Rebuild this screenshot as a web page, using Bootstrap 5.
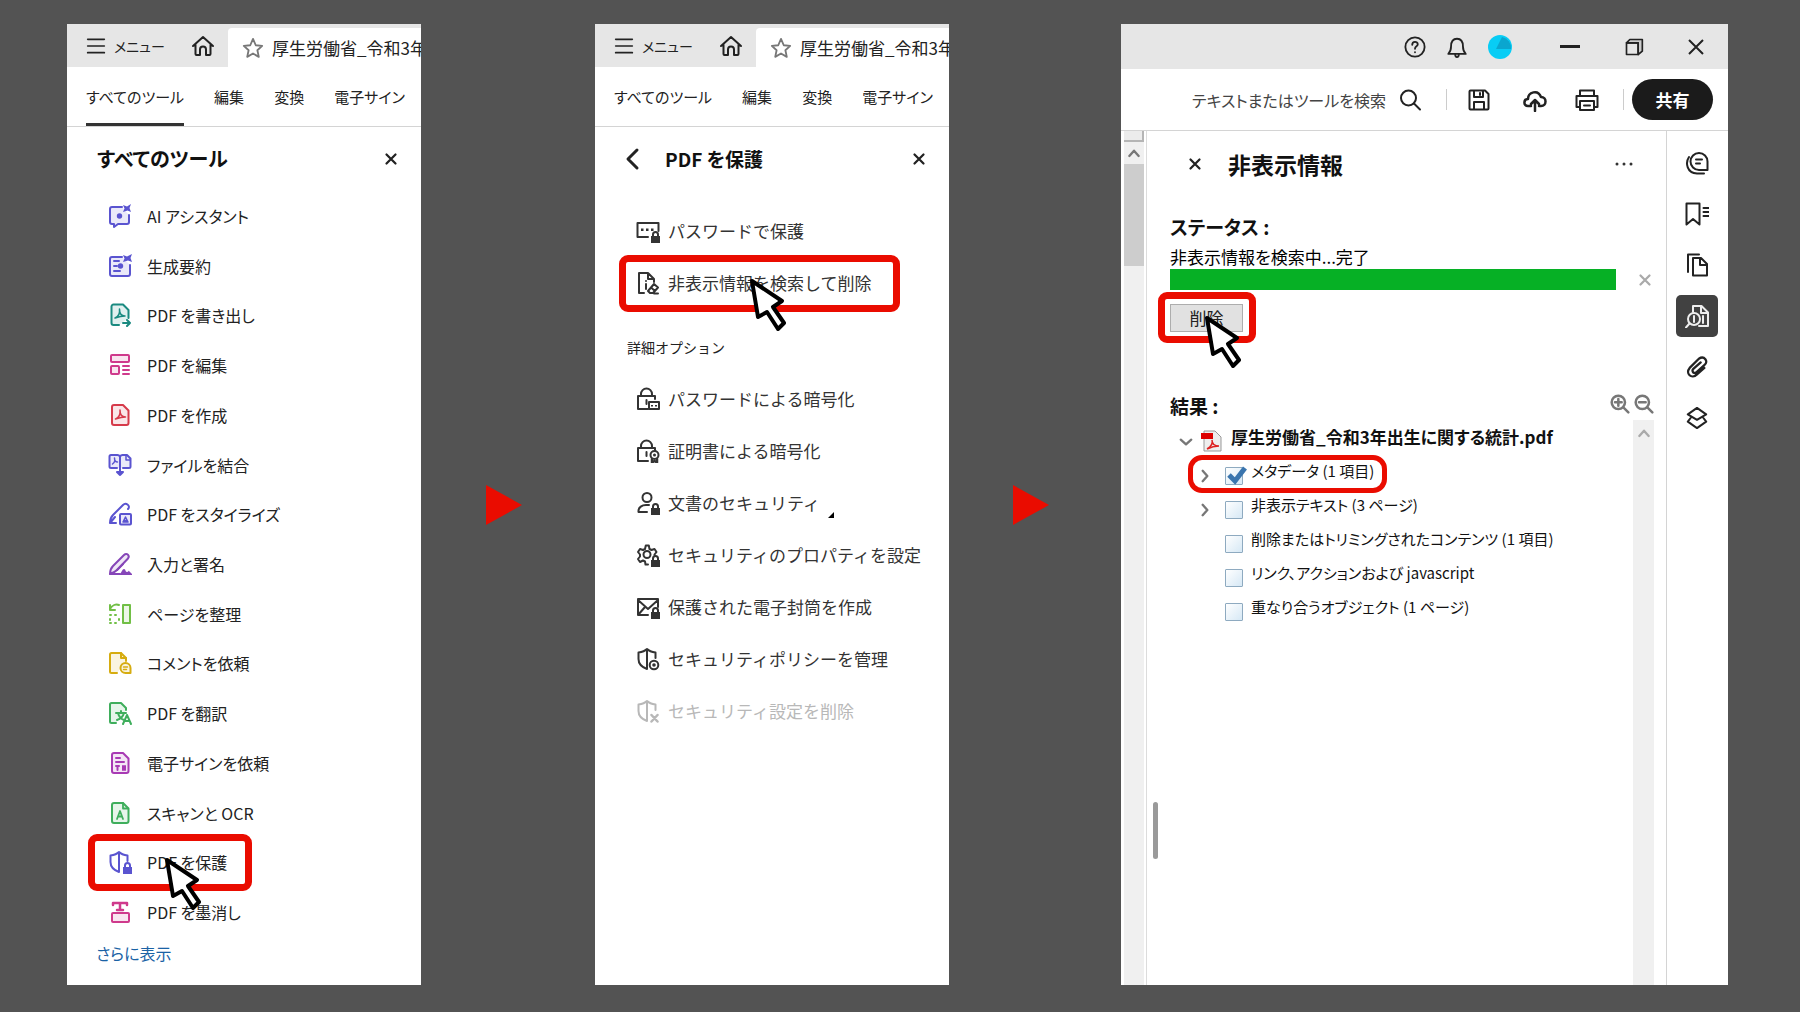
<!DOCTYPE html>
<html lang="ja">
<head>
<meta charset="utf-8">
<meta name="viewport" content="width=device-width, initial-scale=1">
<title>PDF の非表示情報を削除する手順</title>
<link href="https://cdn.jsdelivr.net/npm/bootstrap@5.3.0/dist/css/bootstrap.min.css" rel="stylesheet">
<style>
:root { --ink: #222; --line: #d4d4d4; --bar: #e6e6e6; --hit: #ea0c00; }
body { background: #535353; color: var(--ink); font-family: "Noto Sans CJK JP", sans-serif; font-size: 17px; line-height: 24px; font-feature-settings: "palt"; }
.steps { display: grid; grid-template-columns: 354fr 174fr 354fr 172fr 607fr; min-height: 100vh; padding: 24px 4% 27px 67px; }
button { font: inherit; font-feature-settings: inherit; color: inherit; background: none; border: 0; padding: 0; white-space: nowrap; }
svg { display: block; flex: none; overflow: visible; }
.ic { width: 24px; height: 24px; fill: none; stroke: currentColor; stroke-width: 2; stroke-linejoin: round; stroke-linecap: round; }
.ic-22 { width: 22px; height: 22px; }
.ic-20 { width: 20px; height: 20px; }
.ic-14 { width: 14px; height: 14px; stroke-width: 4; }
.bold-line { stroke-width: 3; }
.solid { fill: currentColor; stroke: none; }
.tint { fill: currentColor; fill-opacity: .13; }
.c-indigo { color: #5a54d0; } .c-teal { color: #1a8a80; } .c-pink { color: #cf3a8c; } .c-red { color: #d63a4a; }
.c-purple { color: #8646b8; } .c-lime { color: #71bf46; } .c-gold { color: #d6ac10; } .c-green { color: #3fae5c; }
.c-violet { color: #a83ab4; } .c-grey { color: #777; } .c-pale { color: #aaa; }
.shot { background: #fff; min-width: 0; }
.arrow svg { width: 36px; height: 40px; fill: var(--hit); }
.topbar { background: var(--bar); height: 43px; padding-left: 19px; }
.menu-label { font-size: 14px; }
.home-btn { margin: 0 13px 0 auto; }
.filetab { background: #fff; width: 193px; height: 39px; padding-left: 14px; border-top-left-radius: 4px; }
.tabs-row { height: 60px; padding-left: 19px; gap: 30px; border-bottom: 1px solid var(--line); font-size: 15px; }
.tabs-row button.on { box-shadow: inset 0 -3px #333; }
.head { height: 64px; padding: 0 21px 0 26px; }
.head h2, .pane h2, .pane h3 { font-size: 20px; line-height: 28px; font-weight: 700; margin: 0; color: #111; }
.head .sub-title { font-size: 19px; }
.pane h2 { font-size: 23px; }
.pane h3 { font-size: 19px; }
.x-btn .ic { width: 18px; height: 18px; }
.toolset { padding-left: 41px; font-size: 16px; }
.toolset > li { flex: 1 1 0; min-height: 32px; }
.toolset button { gap: 15px; }
.more { height: 48px; padding-left: 29px; }
.more a { color: #1a62a5; text-decoration: none; font-size: 16px; }
.guard { padding-left: 41px; font-feature-settings: normal; }
.guard-main { padding-top: 14px; }
.guard > li { height: 52px; }
.guard button { gap: 8px; color: #333; }
.guard .dim { color: #b8b8b8; }
.guard-title { font-size: 14px; padding: 12px 0 0 32px; height: 64px; font-feature-settings: normal; }
.mark-box { position: absolute; border: 7px solid var(--hit); border-radius: 9px; pointer-events: none; }
.pointer { position: absolute; width: 36px; height: 52px; fill: #fff; stroke: #000; stroke-width: 4; stroke-linejoin: round; pointer-events: none; z-index: 3; }
.hit-a { left: -20px; width: 164px; top: -4px; bottom: -4px; }
.ptr-a { left: 57px; top: 20px; }
.hit-b { left: -17px; width: 281px; top: -2px; bottom: -3px; }
.ptr-b { left: 114px; top: 22px; }
.hit-c { left: -12px; right: -13px; top: -12px; bottom: -11px; }
.ptr-c { left: 35px; top: 12px; }
.hit-d { left: 18px; width: 199px; top: 1px; bottom: -5px; border-width: 5px; border-radius: 14px; }
.winbar { background: var(--bar); height: 45px; padding-right: 24px; }
.win-gap { margin-left: 44px; }
.toolbar { height: 62px; border-bottom: 1px solid var(--line); padding-right: 15px; }
.find-box { border: 0; outline: 0; text-align: right; width: 220px; padding: 0; color: #444; font: inherit; font-size: 16px; background: none; }
.find-box::placeholder { color: #444; opacity: 1; }
.split { width: 1px; height: 21px; background: #ccc; }
.share { background: #1b1b1b; color: #fff; border-radius: 21px; height: 41px; width: 81px; font-weight: 700; }
.outer-scroll { width: 26px; border-right: 1px solid #dcdcdc; padding: 0 2px 0 3px; }
.outer-scroll .stub { height: 11px; background: #ececec; border: solid #b5b5b5; border-width: 0 2px 2px 0; }
.track { background: #f0f0f0; color: #777; }
.outer-scroll .thumb { height: 102px; background: #cdcdcd; }
.grip { width: 5px; height: 57px; border-radius: 3px; background: #9a9a9a; position: absolute; left: 6px; top: 70%; margin-top: 73px; }
.rail { width: 62px; border-left: 1px solid var(--line); padding: 11px 2px 0 0; gap: 9px; }
.rail button { width: 42px; height: 42px; border-radius: 5px; display: flex; align-items: center; justify-content: center; }
.rail .on { background: #414141; color: #eee; }
.pane { padding: 0 12px 0 23px; min-width: 0; }
.pane-head { height: 66px; }
.progress { height: 21px; border-radius: 0; background: #eee; }
.progress-bar { background: #06b025; }
.del-row { padding-top: 14px; }
.del-btn { width: 73px; height: 28px; background: #e1e1e1; border: 1px solid #adadad; }
.tree { font-size: 15px; color: #111; }
.tree li { height: 34px; position: relative; padding-left: 28px; }
.tree li.root { padding-left: 9px; font-size: 17px; font-weight: 700; }
.tree .twist { width: 18px; padding-top: 10px; color: #777; }
.tree input { appearance: none; width: 18px; height: 18px; margin: 10px 8px 0 9px; border: 1px solid #8eaac0; border-radius: 1px; background: linear-gradient(135deg, #fff, #d6e8f5); flex: none; }
.tick { position: absolute; left: 57px; top: 12px; width: 20px; height: 18px; fill: none; stroke: #3a75ae; stroke-width: 5; pointer-events: none; }
.inner-scroll { width: 21px; padding-top: 6px; }
</style>
</head>
<body>
<svg width="0" height="0" class="position-absolute" aria-hidden="true">
<defs>
<symbol id="menu" viewBox="0 0 24 24"><path d="M2 4h20M2 12h20M2 20h20"/></symbol>
<symbol id="home" viewBox="0 0 24 24"><path d="M2 12 12 3l10 9M4.500 10.500V20a1 1 0 0 0 1 1H9v-5.500a3 3 0 0 1 6 0V21h3.500a1 1 0 0 0 1-1v-9.500"/></symbol>
<symbol id="star" viewBox="0 0 24 24"><path d="m12 2 3 7 7 .7-5.200 4.800 1.500 7.200-6.300-3.700-6.300 3.700 1.500-7.200L2 9.700 9 9z"/></symbol>
<symbol id="close" viewBox="0 0 24 24"><path d="m6 6 12 12M18 6 6 18"/></symbol>
<symbol id="up" viewBox="0 0 24 24"><path d="m4 17 8-9 8 9"/></symbol>
<symbol id="right" viewBox="0 0 24 24"><path d="m8 3 8 9-8 9"/></symbol>
<symbol id="down" viewBox="0 0 24 24"><path d="m3 8 9 8 9-8"/></symbol>
<symbol id="back" viewBox="0 0 24 24"><path d="m16 3-9 9 9 9"/></symbol>
<symbol id="ai" viewBox="0 0 24 24"><path class="tint" d="M14 3H4a2 2 0 0 0-2 2v13a2 2 0 0 0 2 2h2v3l4-3h9a2 2 0 0 0 2-2v-7"/><path class="solid" d="m15 1 4 1.500L23 0l-1.500 4L23 8l-3.500-1.500L15 8l1.500-3.500z"/><circle class="solid" cx="11.500" cy="12" r="2.700"/></symbol>
<symbol id="gen" viewBox="0 0 24 24"><path class="tint" d="M14 3H4a2 2 0 0 0-2 2v15a2 2 0 0 0 2 2h16a2 2 0 0 0 2-2v-9"/><path d="M6 7h5M6 12h3M6 17h6"/><path class="solid" d="m15 1 4 1.500L24 0l-1.500 4L24 8l-4-1.500L15 8l1.500-3.500z"/><circle class="solid" cx="12.500" cy="12" r="2.700"/></symbol>
<symbol id="export" viewBox="0 0 24 24"><path class="tint" d="M11 22H5.500a2 2 0 0 1-2-2V3.500a2 2 0 0 1 2-2H15l5.500 5.500v8"/><path d="M15 20h7m-3-3 3 3-3 3"/><path stroke-width="1.500" d="M7 15c3-1 5-4 4.500-9 0 5 2 7 5.500 7-4 0-7 1-10 2"/></symbol>
<symbol id="edit" viewBox="0 0 24 24"><rect class="tint" x="3" y="2" width="18" height="7" rx="1"/><rect class="tint" x="3" y="13" width="8" height="8" rx="1"/><path d="M15 13h6M15 17h6M15 21h6"/></symbol>
<symbol id="create" viewBox="0 0 24 24"><path class="tint" d="M15 2H6a2 2 0 0 0-2 2v16a2 2 0 0 0 2 2h12.500a2 2 0 0 0 2-2V7.500z"/><path stroke-width="1.500" d="M7.500 16c3-1 5-4 4.500-9 0 5 2 7 5.500 7-4 0-7 1-10 2"/></symbol>
<symbol id="merge" viewBox="0 0 24 24"><path class="tint" d="M9 15H3a1.500 1.500 0 0 1-1.500-1.500v-10A1.500 1.500 0 0 1 3 2h6.500c2 0 2 1 2.500 2 .5-1 .5-2 2.500-2H19l3.500 3.500v8A1.500 1.500 0 0 1 21 15h-6"/><path d="M12 4v18m-3-3 3 3 3-3z"/><path stroke-width="1.500" d="M4.500 11C7 9 7 8 6.500 5c0 3 1 4 3 4M18 2.500V7h4"/></symbol>
<symbol id="stylize" viewBox="0 0 24 24"><path d="M8 21H2c0-4 1-6 3-8L15 3c3-3 8 1 5 4M2 21l5-6"/><rect class="tint" x="12" y="12" width="11" height="10.500" rx="1"/><path stroke-width="1.500" d="m15 20 2.500-5 2.500 5zm1-1.500h3"/></symbol>
<symbol id="sign" viewBox="0 0 24 24"><path class="tint" d="M2 22c0-3 1-6 3-8L16 3c3-3 6 1 4 3.500L9 18c-2 2-4 3-7 4z"/><path d="M2 22h10M9 18l6-6"/><path class="solid" d="M11 23c2-1 3-6 5-6s1 3 3 3 1-2 2-1l3 3v1z"/></symbol>
<symbol id="organize" viewBox="0 0 24 24"><rect class="tint" x="15" y="3" width="7" height="18"/><path d="M2 8V3m0 5h5M2 7c2-4 6-5 9-4"/><path stroke-dasharray="1 4" d="M2 13h9M2 21h9M2 17v1M11 17v1"/></symbol>
<symbol id="comment" viewBox="0 0 24 24"><path class="tint" d="M9 22H3.500A1.500 1.500 0 0 1 2 20.500v-17A1.500 1.500 0 0 1 3.500 2H13l5 5v3"/><path d="M13 2v5h5"/><path class="tint" d="M17.500 12a5 5 0 0 1 5 5v5h-5a5 5 0 0 1 0-10z"/><path stroke-width="1.500" d="M15.500 16h4M15.500 18.500h3"/></symbol>
<symbol id="translate" viewBox="0 0 24 24"><path class="tint" d="M8 22H3.500A1.500 1.500 0 0 1 2 20.500v-17A1.500 1.500 0 0 1 3.500 2H13l5 5v2"/><path d="M8 12h10M13 10v2M16 12c-1 4-4 6-7 7M10 12c1 4 3 6 6 7M15 23l4-9 4 9m-6.500-3h5"/></symbol>
<symbol id="esign" viewBox="0 0 24 24"><path class="tint" d="M15 2H6a2 2 0 0 0-2 2v16a2 2 0 0 0 2 2h12.500a2 2 0 0 0 2-2V7.500z"/><path d="M8 7h4M8 11h8M8 15h3M9.500 15v4M15 15v4M17 15v4"/></symbol>
<symbol id="ocr" viewBox="0 0 24 24"><path class="tint" d="M15 2H6a2 2 0 0 0-2 2v16a2 2 0 0 0 2 2h12.500a2 2 0 0 0 2-2V7.500z"/><path stroke-width="1.800" d="M15 2v5.500h5M9 18l3-8 3 8m-5-2.500h4"/></symbol>
<symbol id="lock" viewBox="0 0 24 24"><path class="solid" d="M15 17h1v-1.500a3.500 3.500 0 0 1 7 0V17h1v7h-9zm3 0h3v-1.500a1.500 1.500 0 0 0-3 0z"/></symbol>
<symbol id="shield" viewBox="0 0 24 24"><path d="M19.500 11V5.500C16 5 13 4 11 2 9 4 6 5 2.500 5.500V12c0 5 3 8 8.500 10V2"/></symbol>
<symbol id="redact" viewBox="0 0 24 24"><path stroke-width="2.500" d="M5 5V3h14v2M12 3v7M9 10h6"/><rect class="tint" x="4" y="13" width="17" height="9" rx="1"/></symbol>
<symbol id="pwd" viewBox="0 0 24 24"><path d="M12 18H1.500V4h21v8"/><path class="solid" d="M5 9.500h2.500V12H5zm5 0h2.500V12H10zm5 0h2.500V12H15z"/></symbol>
<symbol id="hidden" viewBox="0 0 24 24"><path d="M8 22H3V2h9l6 6v3M12 2v6h6M10 13v5M10 10v.1"/><path d="m12 20 6-7 4 3.500-5 5.500h-3zm3-3.500 4 3.500M18 22.500h4"/></symbol>
<symbol id="bodylock" viewBox="0 0 24 24"><path d="M12 22H2V9h17v3M5 9V7a5.500 5.500 0 0 1 11 0v2M10.500 13v4"/></symbol>
<symbol id="card-b" viewBox="0 0 24 24"><path d="M13 15h10v7H13z"/><path class="solid" d="M15 18h2v1.500h-2zm4 0h2v1.500h-2z"/></symbol>
<symbol id="ribbon" viewBox="0 0 24 24"><circle cx="18.500" cy="16" r="4"/><path d="M16 20v3.500l2.500-1.500 2.500 1.500V20" stroke-width="2.500"/><circle class="solid" cx="18.500" cy="16" r="1.500"/></symbol>
<symbol id="person" viewBox="0 0 24 24"><circle cx="11" cy="6.500" r="4.500"/><path d="M11 21H2.500c-.5-5 4-7 7.500-7h3"/></symbol>
<symbol id="gear" viewBox="0 0 24 24"><path d="M12 21.500h-2.500L9 18.500l-2-1-3 1.500-2-3 2-2.500v-2L2 9l2-3 3 1 2-1 .8-3.500h3l.7 3.500 2 1 3-1 2 3-2 2.500v.5"/><circle cx="11" cy="11.500" r="3.500"/></symbol>
<symbol id="mail" viewBox="0 0 24 24"><path d="M12 20H2V4h20v8M2 5l10 9L22 5M2 20l7-8"/></symbol>
<symbol id="cog-b" viewBox="0 0 24 24"><circle cx="18" cy="18" r="4.300"/><circle class="solid" cx="18" cy="18" r="1.800"/></symbol>
<symbol id="x-b" viewBox="0 0 24 24"><path stroke-width="2.500" d="m15.500 16 6 6.500m0-6.500-6 6.500"/></symbol>
<symbol id="help" viewBox="0 0 24 24"><circle cx="12" cy="12" r="10.500"/><path d="M9 9.500c0-4 6-4 6-.5 0 2.500-3 2-3 5M12 17.500v.2"/></symbol>
<symbol id="bell" viewBox="0 0 24 24"><path d="M2.500 19.500h19c-2-2-3-3.500-3-8 0-5-2-8.500-6.500-8.500s-6.500 3.500-6.500 8.500c0 4.500-1 6-3 8zM10 20c0 4 4 4 4 0"/></symbol>
<symbol id="restore" viewBox="0 0 24 24"><path d="M3 7h14v14H3z"/><path class="tint" d="m3 7 4-4h15v14l-5 4V7z"/></symbol>
<symbol id="find" viewBox="0 0 24 24"><circle cx="10.500" cy="10" r="7.500"/><path d="m16 15.500 6 6"/></symbol>
<symbol id="save" viewBox="0 0 24 24"><path d="M2.500 3.500a1 1 0 0 1 1-1H18l3.500 3.500v14.500a1 1 0 0 1-1 1h-17a1 1 0 0 1-1-1zM7 3v6h9V3M7 21v-7h10v7M13 5v2"/></symbol>
<symbol id="cloud" viewBox="0 0 24 24"><path stroke-width="2.500" d="M8 18H5c-5 0-4.500-7 0-7 0-7 10-10 13-2 6 0 6 9 0 9h-2M12 23V12m-4 4 4-4 4 4"/></symbol>
<symbol id="print" viewBox="0 0 24 24"><path d="M5 19H1.500V8h21v11H19M5 8V2.500h14V8M5 13h14v9H5zM9 17.500h6"/></symbol>
<symbol id="chat" viewBox="0 0 24 24"><path d="M14 2a8.500 8.500 0 0 1 8.500 8.500V19H14a8.500 8.500 0 0 1 0-17zM11 8.500h6M11 12.500h4M4 6c-4 6-2 16 8 16.500h7"/></symbol>
<symbol id="bookmark" viewBox="0 0 24 24"><path d="M1.500 1.500h13v21L8 17l-6.500 5.500zM18.500 6H24M18.500 10H24M18.500 14H24"/></symbol>
<symbol id="pages" viewBox="0 0 24 24"><path d="M8 5h8l6 6v11.500H8zM15 5v7h7M3 19V1.500h11"/></symbol>
<symbol id="inspect" viewBox="0 0 24 24"><path d="M8 8V2h8.500L23 8.500V22h-9M16 2v7h6"/><circle cx="9" cy="15" r="6"/><path d="m4.500 19.500-3.500 4M9 12v6M18 12v7"/></symbol>
<symbol id="clip" viewBox="0 0 24 24"><path stroke-width="2.500" d="m20 13-8 7c-6 6-13-1-8-7L14 3c6-4 11 3 6 7l-9 8c-3 2-5-2-3-4l8-7"/></symbol>
<symbol id="layers" viewBox="0 0 24 24"><path stroke-width="2.200" d="m12 1 10 7-10 6L2 8zM5 12l-3 4 10 7 10-7-3-4"/></symbol>
<symbol id="zin" viewBox="0 0 24 24"><circle cx="10" cy="10" r="8"/><path d="m16 16 6 6M6 10h8M10 6v8"/></symbol>
<symbol id="zout" viewBox="0 0 24 24"><circle cx="10" cy="10" r="8"/><path d="m16 16 6 6M6 10h8"/></symbol>
<symbol id="cursor" viewBox="0 0 36 52"><path d="M2 2 32 22 23 28 34 44 28 50 17 33 8 38z"/></symbol>
</defs>
</svg>

<main class="steps">
  <!-- Step 1: all tools -->
  <section class="shot d-flex flex-column overflow-hidden">
    <div class="topbar d-flex align-items-center">
      <button class="d-flex align-items-center gap-2" type="button"><svg class="ic ic-20"><use href="#menu"/></svg><span class="menu-label">メニュー</span></button>
      <button class="home-btn" type="button" aria-label="ホーム"><svg class="ic"><use href="#home"/></svg></button>
      <div class="filetab d-flex align-items-center align-self-end text-nowrap"><svg class="ic ic-22 c-grey me-2"><use href="#star"/></svg>厚生労働省_令和3年</div>
    </div>
    <nav class="tabs-row d-flex text-nowrap"><button class="on" type="button">すべてのツール</button><button type="button">編集</button><button type="button">変換</button><button type="button">電子サイン</button></nav>
    <div class="head d-flex align-items-center justify-content-between"><h2 class="ps-1">すべてのツール</h2><button class="x-btn" type="button" aria-label="閉じる"><svg class="ic bold-line"><use href="#close"/></svg></button></div>
    <ul class="toolset list-unstyled d-flex flex-column flex-grow-1 mb-0">
      <li class="d-flex"><button class="d-flex align-items-center" type="button"><svg class="ic c-indigo"><use href="#ai"/></svg>AI アシスタント</button></li>
      <li class="d-flex"><button class="d-flex align-items-center" type="button"><svg class="ic c-indigo"><use href="#gen"/></svg>生成要約</button></li>
      <li class="d-flex"><button class="d-flex align-items-center" type="button"><svg class="ic c-teal"><use href="#export"/></svg>PDF を書き出し</button></li>
      <li class="d-flex"><button class="d-flex align-items-center" type="button"><svg class="ic c-pink"><use href="#edit"/></svg>PDF を編集</button></li>
      <li class="d-flex"><button class="d-flex align-items-center" type="button"><svg class="ic c-red"><use href="#create"/></svg>PDF を作成</button></li>
      <li class="d-flex"><button class="d-flex align-items-center" type="button"><svg class="ic c-indigo"><use href="#merge"/></svg>ファイルを結合</button></li>
      <li class="d-flex"><button class="d-flex align-items-center" type="button"><svg class="ic c-indigo"><use href="#stylize"/></svg>PDF をスタイライズ</button></li>
      <li class="d-flex"><button class="d-flex align-items-center" type="button"><svg class="ic c-purple"><use href="#sign"/></svg>入力と署名</button></li>
      <li class="d-flex"><button class="d-flex align-items-center" type="button"><svg class="ic c-lime"><use href="#organize"/></svg>ページを整理</button></li>
      <li class="d-flex"><button class="d-flex align-items-center" type="button"><svg class="ic c-gold"><use href="#comment"/></svg>コメントを依頼</button></li>
      <li class="d-flex"><button class="d-flex align-items-center" type="button"><svg class="ic c-green"><use href="#translate"/></svg>PDF を翻訳</button></li>
      <li class="d-flex"><button class="d-flex align-items-center" type="button"><svg class="ic c-violet"><use href="#esign"/></svg>電子サインを依頼</button></li>
      <li class="d-flex"><button class="d-flex align-items-center" type="button"><svg class="ic c-green"><use href="#ocr"/></svg>スキャンと OCR</button></li>
      <li class="d-flex position-relative"><button class="d-flex align-items-center" type="button"><svg class="ic c-indigo"><use href="#shield"/><use href="#lock"/></svg>PDF を保護</button><span class="mark-box hit-a"></span><svg class="pointer ptr-a"><use href="#cursor"/></svg></li>
      <li class="d-flex"><button class="d-flex align-items-center" type="button"><svg class="ic c-pink"><use href="#redact"/></svg>PDF を墨消し</button></li>
    </ul>
    <div class="more pt-1"><a href="#">さらに表示</a></div>
  </section>

  <div class="arrow d-flex align-items-center justify-content-center pe-2"><svg viewBox="0 0 36 40"><path d="M0 0 36 20 0 40z"/></svg></div>

  <!-- Step 2: protection tools -->
  <section class="shot d-flex flex-column overflow-hidden">
    <div class="topbar d-flex align-items-center">
      <button class="d-flex align-items-center gap-2" type="button"><svg class="ic ic-20"><use href="#menu"/></svg><span class="menu-label">メニュー</span></button>
      <button class="home-btn" type="button" aria-label="ホーム"><svg class="ic"><use href="#home"/></svg></button>
      <div class="filetab d-flex align-items-center align-self-end text-nowrap"><svg class="ic ic-22 c-grey me-2"><use href="#star"/></svg>厚生労働省_令和3年</div>
    </div>
    <nav class="tabs-row d-flex text-nowrap"><button type="button">すべてのツール</button><button type="button">編集</button><button type="button">変換</button><button type="button">電子サイン</button></nav>
    <div class="head d-flex align-items-center"><button type="button" aria-label="戻る"><svg class="ic bold-line"><use href="#back"/></svg></button><h2 class="sub-title ps-3 ms-1">PDF を保護</h2><button class="x-btn ms-auto" type="button" aria-label="閉じる"><svg class="ic bold-line"><use href="#close"/></svg></button></div>
    <ul class="guard guard-main list-unstyled mb-0">
      <li class="d-flex"><button class="d-flex align-items-center" type="button"><svg class="ic"><use href="#pwd"/><use href="#lock"/></svg>パスワードで保護</button></li>
      <li class="d-flex position-relative"><button class="d-flex align-items-center" type="button"><svg class="ic"><use href="#hidden"/></svg>非表示情報を検索して削除</button><span class="mark-box hit-b"></span><svg class="pointer ptr-b"><use href="#cursor"/></svg></li>
    </ul>
    <div class="guard-title d-flex align-items-center">詳細オプション</div>
    <ul class="guard list-unstyled mb-0">
      <li class="d-flex"><button class="d-flex align-items-center" type="button"><svg class="ic"><use href="#bodylock"/><use href="#card-b"/></svg>パスワードによる暗号化</button></li>
      <li class="d-flex"><button class="d-flex align-items-center" type="button"><svg class="ic"><use href="#bodylock"/><use href="#ribbon"/></svg>証明書による暗号化</button></li>
      <li class="d-flex"><button class="d-flex align-items-center" type="button"><svg class="ic"><use href="#person"/><use href="#lock"/></svg>文書のセキュリティ<svg class="mt-4" width="6" height="6"><path d="M6 0v6H0z"/></svg></button></li>
      <li class="d-flex"><button class="d-flex align-items-center" type="button"><svg class="ic"><use href="#gear"/><use href="#lock"/></svg>セキュリティのプロパティを設定</button></li>
      <li class="d-flex"><button class="d-flex align-items-center" type="button"><svg class="ic"><use href="#mail"/><use href="#lock"/></svg>保護された電子封筒を作成</button></li>
      <li class="d-flex"><button class="d-flex align-items-center" type="button"><svg class="ic"><use href="#shield"/><use href="#cog-b"/></svg>セキュリティポリシーを管理</button></li>
      <li class="d-flex"><button class="dim d-flex align-items-center" type="button" disabled><svg class="ic"><use href="#shield"/><use href="#x-b"/></svg>セキュリティ設定を削除</button></li>
    </ul>
  </section>

  <div class="arrow d-flex align-items-center justify-content-center pe-2"><svg viewBox="0 0 36 40"><path d="M0 0 36 20 0 40z"/></svg></div>

  <!-- Step 3: hidden information -->
  <section class="shot d-flex flex-column">
    <div class="winbar d-flex align-items-center justify-content-end">
      <button class="me-3" type="button" aria-label="ヘルプ"><svg class="ic ic-22"><use href="#help"/></svg></button>
      <button class="me-3 ms-1" type="button" aria-label="通知"><svg class="ic ic-22"><use href="#bell"/></svg></button>
      <button class="ms-1" type="button" aria-label="アカウント"><svg width="24" height="24"><circle cx="12" cy="12" r="12" fill="#08cdf5"/><path d="M8 14 14 2a11 11 0 0 1 9 12z" fill="#0aa6cf"/></svg></button>
      <button class="ms-5" type="button" aria-label="最小化"><svg width="20" height="3"><path d="M0 0h20v3H0z" fill="#222"/></svg></button>
      <button class="win-gap" type="button" aria-label="元に戻す"><svg class="ic ic-20"><use href="#restore"/></svg></button>
      <button class="win-gap" type="button" aria-label="ウィンドウを閉じる"><svg width="16" height="16" stroke="#222" stroke-width="2"><path d="m1 1 14 14M15 1 1 15"/></svg></button>
    </div>
    <div class="toolbar d-flex align-items-center justify-content-end">
      <input class="find-box" type="text" placeholder="テキストまたはツールを検索" aria-label="検索">
      <button class="ms-2 ps-1 me-4" type="button" aria-label="検索する"><svg class="ic"><use href="#find"/></svg></button>
      <span class="split"></span>
      <button class="ms-3 ps-1" type="button" aria-label="保存"><svg class="ic"><use href="#save"/></svg></button>
      <button class="ms-4 ps-2" type="button" aria-label="アップロード"><svg class="ic"><use href="#cloud"/></svg></button>
      <button class="ms-4 ps-1 me-3" type="button" aria-label="印刷"><svg class="ic"><use href="#print"/></svg></button>
      <span class="split ms-2 me-2"></span>
      <button class="share" type="button">共有</button>
    </div>
    <div class="d-flex flex-grow-1">
      <div class="outer-scroll d-flex flex-column"><div class="stub"></div><div class="track flex-grow-1"><div class="d-flex justify-content-center py-1"><svg class="ic ic-14"><use href="#up"/></svg></div><div class="thumb"></div></div></div>
      <div class="pane position-relative d-flex flex-column flex-grow-1">
        <span class="grip"></span>
        <div class="pane-head d-flex align-items-center">
          <button class="x-btn ms-3" type="button" aria-label="パネルを閉じる"><svg class="ic bold-line"><use href="#close"/></svg></button>
          <h2 class="ms-4">非表示情報</h2>
          <button class="ms-auto me-3 pe-1" type="button" aria-label="その他"><svg width="20" height="4" fill="#333"><circle cx="3" cy="2" r="1.500"/><circle cx="10" cy="2" r="1.500"/><circle cx="17" cy="2" r="1.500"/></svg></button>
        </div>
        <h3 class="mt-3">ステータス :</h3>
        <div class="mt-1 text-black">非表示情報を検索中...完了</div>
        <div class="d-flex align-items-center">
          <div class="progress flex-grow-1" role="progressbar" aria-label="検索の進行" aria-valuenow="100" aria-valuemin="0" aria-valuemax="100"><div class="progress-bar" style="width:100%"></div></div>
          <button class="ms-3 ps-1 x-btn c-pale" type="button" aria-label="中止"><svg class="ic bold-line"><use href="#close"/></svg></button>
        </div>
        <div class="del-row d-flex"><div class="position-relative"><button class="del-btn" type="button">削除</button><span class="mark-box hit-c"></span><svg class="pointer ptr-c"><use href="#cursor"/></svg></div></div>
        <div class="d-flex align-items-center justify-content-between mt-5 pt-2">
          <h3 class="mt-1">結果 :</h3>
          <div class="d-flex gap-1 c-grey"><button type="button" aria-label="拡大"><svg class="ic ic-20 bold-line"><use href="#zin"/></svg></button><button type="button" aria-label="縮小"><svg class="ic ic-20 bold-line"><use href="#zout"/></svg></button></div>
        </div>
        <div class="d-flex flex-grow-1">
          <ul class="tree list-unstyled flex-grow-1 mb-0">
            <li class="root d-flex align-items-center"><button class="twist" type="button" aria-label="折りたたむ"><svg class="ic ic-14"><use href="#down"/></svg></button><svg class="mt-2 ms-1 me-2" width="22" height="22"><path d="M3 1h11l6 6v14H3z" fill="#eee" stroke="#999"/><path d="M0 3h12v6H0z" fill="#d00"/><path d="M6 19c5-3 6-6 5-9 0 4 3 6 7 6-5 0-8 1-12 3" fill="none" stroke="#d22" stroke-width="1.500"/></svg><span>厚生労働省_令和3年出生に関する統計.pdf</span></li>
            <li class="d-flex align-items-center"><button class="twist" type="button" aria-label="展開"><svg class="ic ic-14"><use href="#right"/></svg></button><input id="c1" type="checkbox" checked><svg class="tick" viewBox="0 0 20 18"><path d="m2 9 6 6L18 2"/></svg><label for="c1">メタデータ (1 項目)</label><span class="mark-box hit-d"></span></li>
            <li class="d-flex align-items-center"><button class="twist" type="button" aria-label="展開"><svg class="ic ic-14"><use href="#right"/></svg></button><input id="c2" type="checkbox"><label for="c2">非表示テキスト (3 ページ)</label></li>
            <li class="d-flex align-items-center"><span class="twist"></span><input id="c3" type="checkbox"><label for="c3">削除またはトリミングされたコンテンツ (1 項目)</label></li>
            <li class="d-flex align-items-center"><span class="twist"></span><input id="c4" type="checkbox"><label for="c4">リンク、アクションおよび javascript</label></li>
            <li class="d-flex align-items-center"><span class="twist"></span><input id="c5" type="checkbox"><label for="c5">重なり合うオブジェクト (1 ページ)</label></li>
          </ul>
          <div class="track inner-scroll"><svg class="ic ic-14 c-pale mx-auto"><use href="#up"/></svg></div>
        </div>
      </div>
      <div class="rail d-flex flex-column align-items-center">
        <button type="button" aria-label="コメント"><svg class="ic"><use href="#chat"/></svg></button>
        <button type="button" aria-label="しおり"><svg class="ic"><use href="#bookmark"/></svg></button>
        <button type="button" aria-label="ページ"><svg class="ic"><use href="#pages"/></svg></button>
        <button class="on" type="button" aria-label="非表示情報"><svg class="ic"><use href="#inspect"/></svg></button>
        <button type="button" aria-label="添付ファイル"><svg class="ic ic-22"><use href="#clip"/></svg></button>
        <button type="button" aria-label="レイヤー"><svg class="ic ic-22"><use href="#layers"/></svg></button>
      </div>
    </div>
  </section>
</main>
<script src="https://cdn.jsdelivr.net/npm/bootstrap@5.3.0/dist/js/bootstrap.bundle.min.js"></script>
</body>
</html>
